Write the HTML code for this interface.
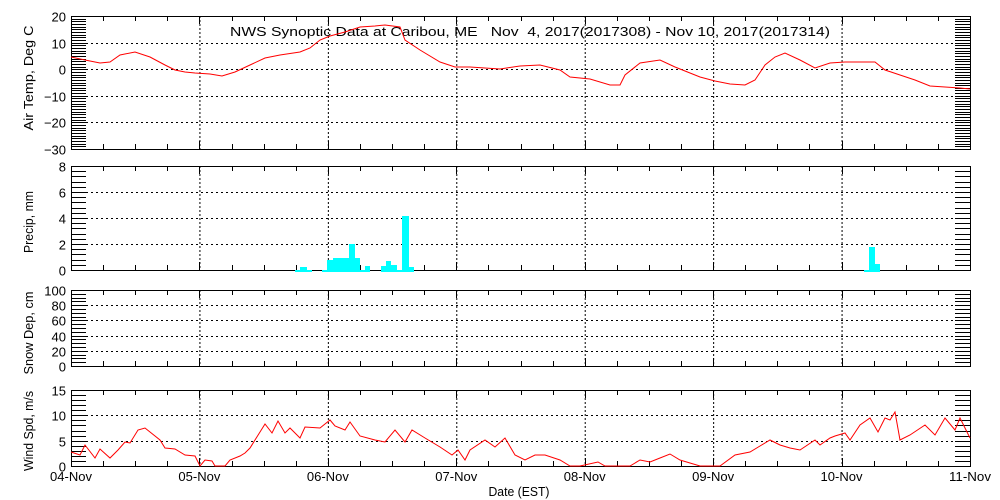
<!DOCTYPE html><html><head><meta charset="utf-8"><style>
html,body{margin:0;padding:0;background:#fff;width:1000px;height:500px;overflow:hidden}
svg{display:block}
text{font-family:"Liberation Sans",sans-serif;fill:#000}
</style></head><body>
<svg id="s" width="1000" height="500" xmlns="http://www.w3.org/2000/svg">
<text x="230" y="36" textLength="600" lengthAdjust="spacingAndGlyphs" style="white-space:pre;font-size:13px">NWS Synoptic Data at Caribou, ME   Nov  4, 2017(2017308) - Nov 10, 2017(2017314)</text>
</svg>
<script>
var s=document.getElementById('s'),h='';
var X0=71,X1=970,dx=(X1-X0)/7;
function ln(a,b,c,d,ex){h+='<line x1="'+a+'" y1="'+b+'" x2="'+c+'" y2="'+d+'" stroke="#000" stroke-width="1" '+(ex||'')+'/>';}
function tx(x,y,t,anc,ex){h+='<text x="'+x+'" y="'+y+'" text-anchor="'+(anc||'end')+'" '+(ex||'')+'>'+t+'</text>';}
function panel(top,bot,vmin,vmax,labs,minor,title,tcy,tl){
 var f=function(v){return bot-(v-vmin)/(vmax-vmin)*(bot-top);};
 for(var i=1;i<7;i++){var x=X0+i*dx;ln(x+.5,top,x+.5,bot,'stroke-dasharray="2,2"');}
 labs.forEach(function(v){var y=Math.round(f(v))+.5;if(v!=vmin&&v!=vmax)ln(X0,y,X1,y,'stroke-dasharray="2,3"');ln(X0,y,X0+15,y);ln(X1-15,y,X1,y);tx(66,y+5,String(v).replace('-','\u2212'),'end','style="font-size:13px"');});
 for(var v=vmin;v<=vmax+1e-6;v+=minor){var y=Math.round(f(v))+.5;ln(X0,y,X0+15,y);ln(X1-15,y,X1,y);}
 for(var i=0;i<=28;i++){var x=Math.round(X0+i*dx/4)+.5;var L=(i%4==0)?8:5;ln(x,bot,x,bot-L);ln(x,top,x,top+L);}
 h+='<rect x="'+(X0+.5)+'" y="'+(top+.5)+'" width="'+(X1-X0)+'" height="'+(bot-top)+'" fill="none" stroke="#000"/>';
 h+='<text transform="translate(33,'+tcy+') rotate(-90)" text-anchor="middle" textLength="'+tl+'" lengthAdjust="spacingAndGlyphs" style="font-size:13px">'+title+'</text>';
 return f;
}
panel(16,149,-30,20,[20,10,0,-10,-20,-30],1,'Air Temp, Deg C',78,105);
panel(166,270,0,8,[8,6,4,2,0],0.4,'Precip, mm',222,62);
panel(290,366,0,100,[100,80,60,40,20,0],5,'Snow Dep, cm',333,83);
panel(390,466,0,15,[15,10,5,0],1,'Wind Spd, m/s',431,80);
var bars=[[295,300,270],[300,307,267],[307,312,270],[322,327,270],[327,333,260],[333,349,258],[349,355,244],[355,360,258],[360,365,270],[365,370,266],[381,386,266],[386,391,261],[391,397,265],[397,402,270],[402,409,216],[409,414,267],[864,869,270],[869,875,247],[875,880,264]];
bars.forEach(function(b){h+='<rect x="'+b[0]+'" y="'+b[2]+'" width="'+(b[1]-b[0])+'" height="'+(272-b[2])+'" fill="#00ffff"/>';});
var T=[[71,57],[85,60],[100,63],[110,62],[120,55],[135,52],[150,57],[165,65],[175,70],[185,72],[195,73],[210,74],[222,76],[235,72],[250,65],[265,58],[280,55],[300,52],[310,48],[320,40],[330,36],[345,32],[360,27],[375,26],[385,25],[400,27],[405,40],[420,50],[440,62],[455,67],[470,67],[485,68],[500,69],[520,66],[540,65],[560,70],[570,77],[590,79],[610,85],[620,85],[625,75],[640,63],[660,60],[675,67],[690,73],[700,77],[715,81],[730,84],[745,85],[755,80],[765,65],[775,57],[785,53],[800,60],[815,68],[830,63],[845,62],[860,62],[875,62],[885,70],[900,75],[915,80],[930,86],[945,87],[960,88],[970,89]];
var W=[[71,452],[80,455],[85,445],[95,458],[100,449],[110,458],[118,450],[125,442],[130,443],[138,430],[145,428],[150,432],[160,440],[165,448],[175,449],[185,455],[195,456],[200,466],[205,460],[212,461],[215,466],[225,466],[230,460],[240,456],[245,453],[250,448],[260,432],[265,424],[272,433],[278,421],[285,433],[290,428],[300,438],[305,427],[320,428],[330,420],[335,426],[345,430],[350,422],[360,436],[375,440],[385,442],[395,430],[405,442],[412,430],[425,438],[440,447],[452,455],[458,450],[465,460],[470,450],[485,440],[495,447],[505,438],[515,455],[525,460],[535,455],[545,455],[560,460],[570,466],[580,466],[598,462],[605,466],[630,466],[640,460],[650,462],[660,458],[670,454],[680,460],[700,466],[720,466],[735,455],[750,452],[760,446],[770,440],[780,445],[790,448],[800,450],[815,440],[820,445],[830,438],[835,436],[845,433],[850,440],[860,425],[870,418],[878,432],[885,418],[890,420],[895,412],[900,440],[910,435],[925,425],[935,435],[945,418],[955,430],[960,418],[970,438]];
function pl(p){h+='<polyline fill="none" stroke="#ff0000" stroke-width="1" points="'+p.map(function(a){return a.join(',')}).join(' ')+'"/>';}
pl(T);pl(W);
var d=['04-Nov','05-Nov','06-Nov','07-Nov','08-Nov','09-Nov','10-Nov','11-Nov'];
d.forEach(function(t,i){tx(X0+i*dx,481,t,'middle','style="font-size:13px" textLength="42" lengthAdjust="spacingAndGlyphs"');});
tx(519,496,'Date (EST)','middle','style="font-size:13px" textLength="61" lengthAdjust="spacingAndGlyphs"');
s.insertAdjacentHTML('beforeend',h);
</script>
</body></html>
